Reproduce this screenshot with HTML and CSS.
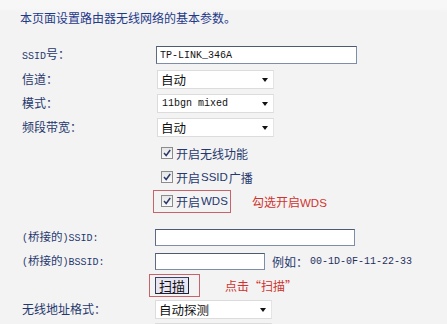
FILE: index.html
```html
<!DOCTYPE html>
<html lang="zh-CN">
<head>
<meta charset="utf-8">
<title>无线网络基本设置</title>
<link rel="stylesheet" href="styles.css">
</head>
<body>
<div class="page">
  <p class="title">本页面设置路由器无线网络的基本参数。</p>

  <div class="form top">
    <div class="row">
      <span class="label"><span class="en">SSID</span>号：</span>
      <div class="input ssid"><span class="en">TP-LINK_346A</span></div>
    </div>
    <div class="row">
      <span class="label">信道：</span>
      <div class="select"><span>自动</span><i class="arrow"></i></div>
    </div>
    <div class="row">
      <span class="label">模式：</span>
      <div class="select"><span class="en">11bgn mixed</span><i class="arrow"></i></div>
    </div>
    <div class="row">
      <span class="label">频段带宽：</span>
      <div class="select"><span>自动</span><i class="arrow"></i></div>
    </div>
    <div class="row check-first">
      <span class="label"></span>
      <label class="check"><span class="box"><svg viewBox="0 0 10 10" width="10" height="10"><path d="M2 5 L4.2 7.5 L8.2 2" fill="none" stroke="#2b3a6b" stroke-width="1.5"/></svg></span>开启无线功能</label>
    </div>
    <div class="row">
      <span class="label"></span>
      <label class="check"><span class="box"><svg viewBox="0 0 10 10" width="10" height="10"><path d="M2 5 L4.2 7.5 L8.2 2" fill="none" stroke="#2b3a6b" stroke-width="1.5"/></svg></span>开启<span class="sans">SSID</span>广播</label>
    </div>
    <div class="row">
      <span class="label"></span>
      <div class="ctl-line">
        <label class="check mark-box wds"><span class="box"><svg viewBox="0 0 10 10" width="10" height="10"><path d="M2 5 L4.2 7.5 L8.2 2" fill="none" stroke="#2b3a6b" stroke-width="1.5"/></svg></span>开启<span class="sans">WDS</span></label>
        <span class="note wds-note">勾选开启<span class="sans">WDS</span></span>
      </div>
    </div>
  </div>

  <div class="form bottom">
    <div class="row">
      <span class="label small"><span class="en">(</span>桥接的<span class="en">)SSID:</span></span>
      <div class="input bridged"></div>
    </div>
    <div class="row">
      <span class="label small"><span class="en">(</span>桥接的<span class="en">)BSSID:</span></span>
      <div class="ctl-line">
        <div class="input bssid"></div>
        <span class="example">例如：<span class="en">00-1D-0F-11-22-33</span></span>
      </div>
    </div>
    <div class="row">
      <span class="label"></span>
      <div class="ctl-line">
        <span class="mark-box scan-box"><button class="scan" type="button">扫描</button></span>
        <span class="note scan-note">点击“扫描”</span>
      </div>
    </div>
    <div class="row">
      <span class="label">无线地址格式：</span>
      <div class="select"><span>自动探测</span><i class="arrow"></i></div>
    </div>
    <div class="row last">
      <span class="label"></span>
      <div class="select"><span></span></div>
    </div>
  </div>
</div>
</body>
</html>
```

FILE: styles.css
```css
html, body {
  margin: 0;
  padding: 0;
  background: #f3f3f3;
  overflow: hidden;
}

.page {
  width: 447px;
  height: 324px;
  overflow: hidden;
  padding: 9px 0 0 20px;
  box-sizing: border-box;
  font-family: "Noto Sans CJK SC", "Liberation Sans", sans-serif;
  font-size: 12px;
  color: #26386e;
  text-autospace: no-autospace;
  background: linear-gradient(#f7f7f7 0, #f7f7f7 8px, #f3f3f3 12px);
}

.title {
  margin: 0;
  height: 18px;
  line-height: 18px;
  color: #1f3a8a;
}

.en {
  font-family: "Liberation Mono", monospace;
  font-size: 10px;
  color: #101a3a;
}

.sans {
  font-family: "Liberation Sans", sans-serif;
  font-size: 11.5px;
  margin: 0 -2px;
}

.form.top {
  margin-top: 16px;
  padding-left: 2px;
}

.form.bottom {
  margin-top: 12px;
  padding-left: 2px;
}

.row {
  display: grid;
  grid-template-columns: 135px auto;
  align-items: center;
  justify-items: start;
  height: 24px;
}

.form.bottom .row {
  grid-template-columns: 133px auto;
}

.row.last {
  height: 4px;
  align-items: end;
  overflow: hidden;
}

.row.last .select {
  height: 2px;
  border-bottom: 0;
}

.check-first {
  margin-top: 2px;
}

.label {
  white-space: nowrap;
  color: #26386e;
  line-height: 16px;
}

.label .en {
  color: #26386e;
}

.label.small {
  font-size: 11.5px;
}

.input {
  box-sizing: border-box;
  height: 18px;
  background: #fff;
  border: 1px solid #7f8ea8;
  border-top-color: #4d5a72;
  border-left-color: #5d6a82;
  display: flex;
  align-items: center;
  padding-left: 3px;
  color: #111;
}

.input .en {
  color: #111;
}

.input.ssid {
  width: 201px;
  margin-left: -1px;
}

.input.bridged {
  width: 200px;
  height: 17px;
}

.input.bssid {
  width: 110px;
  height: 17px;
}

.select {
  position: relative;
  box-sizing: border-box;
  width: 117px;
  height: 19px;
  background: #fff;
  border: 1px solid #dcdcdc;
  border-right-color: #e4e4e4;
  display: flex;
  align-items: center;
  padding-left: 3px;
  color: #111;
  font-size: 12.5px;
}

.select .en {
  font-size: 10px;
  padding-left: 1px;
  color: #111;
}

.arrow {
  position: absolute;
  right: 5px;
  top: 7px;
  width: 0;
  height: 0;
  border-left: 3.5px solid transparent;
  border-right: 3.5px solid transparent;
  border-top: 4px solid #111;
}

.check {
  display: flex;
  align-items: center;
  gap: 3px;
  color: #26386e;
  margin-left: 4px;
}

.box {
  box-sizing: border-box;
  width: 12px;
  height: 12px;
  border: 1px solid #8c8c8c;
  background: linear-gradient(#e6e6e6, #fafafa);
  display: flex;
  align-items: center;
  justify-content: center;
}

.ctl-line {
  display: flex;
  align-items: center;
}

.mark-box {
  box-sizing: border-box;
  border: 1px solid #c7646b;
}

.check.wds {
  margin-left: -4px;
  width: 78px;
  height: 23px;
  padding-left: 7px;
}

.note {
  color: #d0332f;
}

.note .sans {
  margin: 0;
}

.wds-note {
  margin-left: 21px;
}

.example {
  margin-left: 7px;
  color: #26386e;
  display: flex;
  align-items: center;
}

.example .en {
  margin-left: 2px;
  color: #1f2f5e;
}

.scan-box {
  display: flex;
  align-items: center;
  margin-left: -6px;
  width: 51px;
  height: 23px;
  padding-left: 5px;
}

.scan {
  box-sizing: border-box;
  width: 34px;
  height: 17px;
  padding: 0;
  margin: 0;
  border: 1px solid #3a4260;
  border-right-color: #1d2235;
  border-bottom-color: #1d2235;
  background: #e6e6f4;
  font-family: "Noto Sans CJK SC", sans-serif;
  font-size: 13px;
  line-height: 15px;
  color: #111;
}

.scan-note {
  margin-left: 25px;
}
```
